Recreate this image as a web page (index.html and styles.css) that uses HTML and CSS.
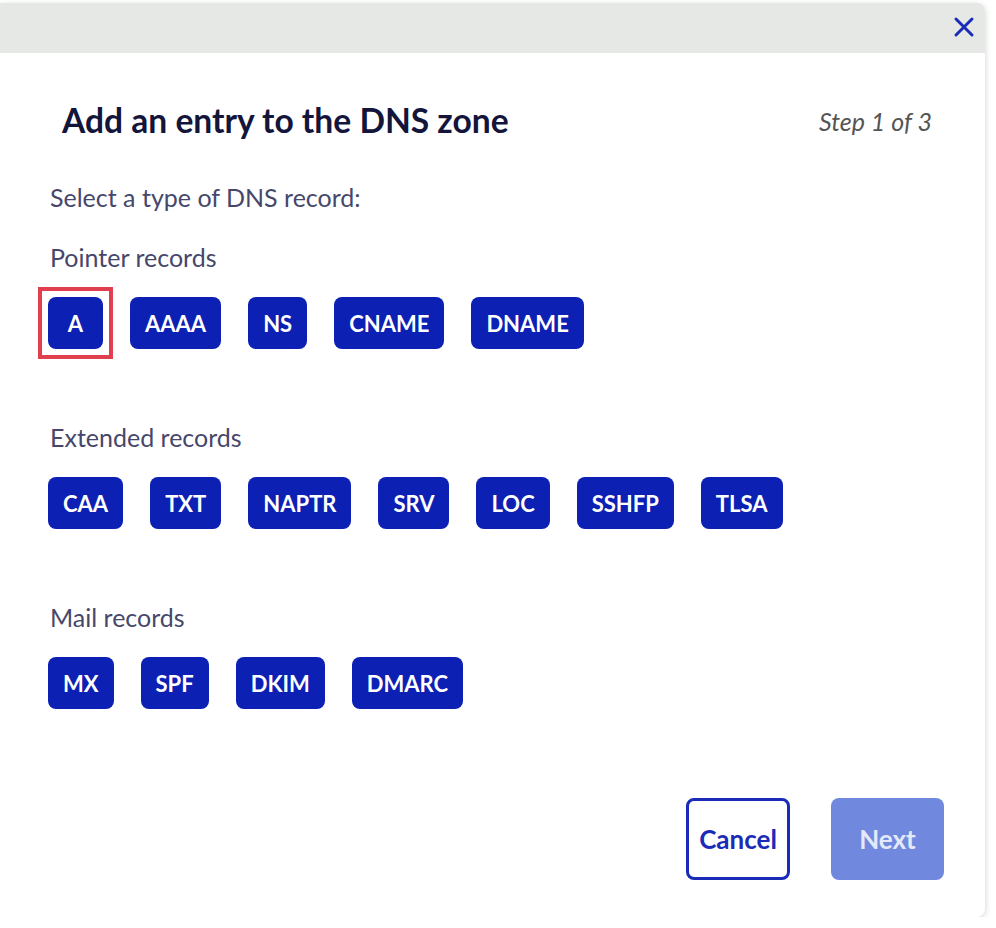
FILE: index.html
```html
<!DOCTYPE html>
<html lang="en">
<head>
    <meta charset="UTF-8">
    <title>Add an entry to the DNS zone</title>
    <link rel="stylesheet" href="styles.css">
</head>
<body>

<div class="modal">
    <div class="modal-header">
        <button class="close" aria-label="Close">
            <svg width="22" height="22" viewBox="0 0 22 22"><path d="M3 3L19 19M19 3L3 19" stroke="#1a2bb8" stroke-width="3" stroke-linecap="round"/></svg>
        </button>
    </div>

    <div class="modal-body">
        <div class="title-row">
            <h2 class="title">Add an entry to the DNS zone</h2>
            <span class="step">Step 1 of 3</span>
        </div>

        <p class="intro">Select a type of DNS record:</p>

        <div class="group">
            <p class="group-label">Pointer records</p>
            <div class="types">
                <span class="type-wrap selected"><button class="type">A</button></span>
                <button class="type">AAAA</button>
                <button class="type">NS</button>
                <button class="type">CNAME</button>
                <button class="type">DNAME</button>
            </div>
        </div>

        <div class="group">
            <p class="group-label">Extended records</p>
            <div class="types">
                <button class="type">CAA</button>
                <button class="type">TXT</button>
                <button class="type">NAPTR</button>
                <button class="type">SRV</button>
                <button class="type">LOC</button>
                <button class="type">SSHFP</button>
                <button class="type">TLSA</button>
            </div>
        </div>

        <div class="group">
            <p class="group-label">Mail records</p>
            <div class="types">
                <button class="type">MX</button>
                <button class="type">SPF</button>
                <button class="type">DKIM</button>
                <button class="type">DMARC</button>
            </div>
        </div>
    </div>

    <div class="modal-footer">
        <button class="btn-cancel">Cancel</button>
        <button class="btn-next" disabled>Next</button>
    </div>
</div>

</body>
</html>
```

FILE: styles.css
```css
body {
    margin: 0;
    background-color: #fff;
    font-family: Lato, "Open Sans", sans-serif;
}
.modal {
    width: 985px;
    height: 914px;
    margin-top: 3px;
    background-color: #fff;
    border-radius: 0 8px 8px 0;
    box-shadow: 0 2px 6px rgba(0, 0, 0, 0.18);
    display: flex;
    flex-direction: column;
    box-sizing: border-box;
}
.modal-header {
    height: 50px;
    background-color: #e6e8e6;
    border-radius: 0 8px 0 0;
    display: flex;
    justify-content: flex-end;
    align-items: center;
    padding-right: 10px;
}
.close {
    border: none;
    background: none;
    padding: 0;
    width: 22px;
    height: 22px;
    margin-top: -2px;
    cursor: pointer;
}
.modal-body {
    padding: 49px 53px 0 48px;
    flex: 1;
}
.title-row {
    display: flex;
    justify-content: space-between;
    align-items: center;
    height: 36px;
}
.title {
    margin: 0 0 0 14px;
    font-size: 33.6px;
    font-weight: 700;
    color: #13153a;
    line-height: 36px;
}
.step {
    font-size: 25px;
    font-style: italic;
    color: #555;
    margin-top: 2px;
}
.intro,
.group-label {
    margin: 0;
    font-size: 25px;
    line-height: 28px;
    color: #46476a;
    padding-left: 2px;
}
.intro {
    margin-top: 45px;
}
.group {
    margin-top: 32px;
}
.group + .group {
    margin-top: 74px;
}
.types {
    display: flex;
    gap: 27px;
    margin-top: 26px;
}
.type {
    height: 52px;
    min-width: 55px;
    padding: 0 15px;
    border: none;
    border-radius: 8px;
    background-color: #0c20b4;
    color: #fff;
    font-family: Lato, sans-serif;
    font-size: 22px;
    font-weight: 700;
    cursor: pointer;
}
.type-wrap {
    display: flex;
}
.selected {
    outline: 4px solid #e0404e;
    outline-offset: 6px;
    border-radius: 0;
}
.modal-footer {
    display: flex;
    justify-content: flex-end;
    gap: 41px;
    padding: 0 41px 37px 0;
}
.btn-cancel,
.btn-next {
    height: 82px;
    border-radius: 8px;
    font-family: Lato, sans-serif;
    font-size: 26px;
    font-weight: 700;
}
.btn-cancel {
    width: 104px;
    background-color: #fff;
    border: 3px solid #1a2bb8;
    color: #1a2bb8;
    cursor: pointer;
}
.btn-next {
    width: 113px;
    background-color: #7089de;
    border: none;
    color: #e4e9fa;
}
```
